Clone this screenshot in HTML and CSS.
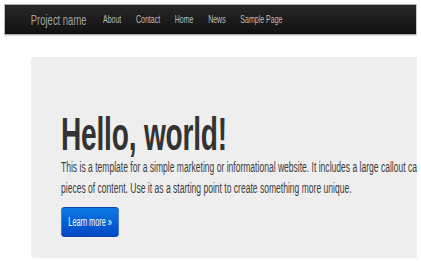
FILE: index.html
```html
<!DOCTYPE html>
<html lang="en">
    <head>
        <meta charset="UTF-8" />
        <meta name="viewport" content="width=device-width, initial-scale=1.0" />
        <title>Bootstrap, from Twitter</title>
        <link rel="stylesheet" href="styles.css">
    </head>
    <body>
        <!-- screenshot is squeezed sideways, so the page is drawn wide and scaled -->
        <div class="viewport">
            <div class="page">
                <div class="navbar">
                    <a class="brand" href="#">Project name</a>
                    <ul class="nav">
                        <li><a href="#">About</a></li>
                        <li><a href="#">Contact</a></li>
                        <li><a href="#">Home</a></li>
                        <li><a href="#">News</a></li>
                        <li><a href="#">Sample Page</a></li>
                    </ul>
                </div>

                <div class="hero-unit">
                    <h1>Hello, world!</h1>
                    <p>This is a template for a simple marketing or informational website. It includes a large callout called the hero unit and three supporting<br>pieces of content. Use it as a starting point to create something more unique.</p>
                    <a class="btn-primary" href="#">Learn more &raquo;</a>
                </div>
            </div>
        </div>
    </body>
</html>
```

FILE: styles.css
```css
body {
    margin: 0;
    background: #fff;
    font-family: "Liberation Sans", Arial, sans-serif;
    overflow: hidden;
}
.viewport {
    width: 417px;
    height: 261px;
    overflow: hidden;
}
.page {
    width: 690px;
    transform: scaleX(0.61);
    transform-origin: 0 0;
}
.navbar {
    display: flex;
    align-items: flex-start;
    margin: 4px 0 0 6.5px;
    width: 674px;
    height: 29px;
    border: 1px solid #a8a8a8;
    border-left-width: 1.6px;
    border-right-width: 1.6px;
    background: linear-gradient(#272727, #111);
    box-shadow: 0 1px 2px rgba(0, 0, 0, 0.12);
}
.brand {
    margin-left: 43px;
    margin-right: 15px;
    font-size: 15.5px;
    line-height: 29px;
    color: #a3a3a3;
    text-decoration: none;
}
.nav {
    display: flex;
    margin: 0;
    padding: 0;
    list-style: none;
}
.nav a {
    display: block;
    padding: 0 12px;
    font-size: 11.5px;
    line-height: 29px;
    color: #bdbdbd;
    text-decoration: none;
}
.hero-unit {
    margin: 22px 0 0 51px;
    width: 640px;
    padding: 54px 0 21px 49px;
    background: #eee;
    border-radius: 5px / 3px;
}
.hero-unit h1 {
    margin: 0;
    font-size: 46px;
    line-height: 46px;
    letter-spacing: -0.3px;
    color: #333;
}
.hero-unit p {
    margin: 0;
    font-size: 14px;
    line-height: 21px;
    color: #3c3c3c;
    white-space: nowrap;
}
.btn-primary {
    display: inline-block;
    margin-top: 8px;
    padding: 0 11px;
    height: 28px;
    line-height: 28px;
    font-size: 12px;
    color: #fff;
    text-decoration: none;
    background: linear-gradient(#0c7ae2, #0048c6);
    border: 1px solid #0846a8;
    border-radius: 6px / 4px;
}
```
